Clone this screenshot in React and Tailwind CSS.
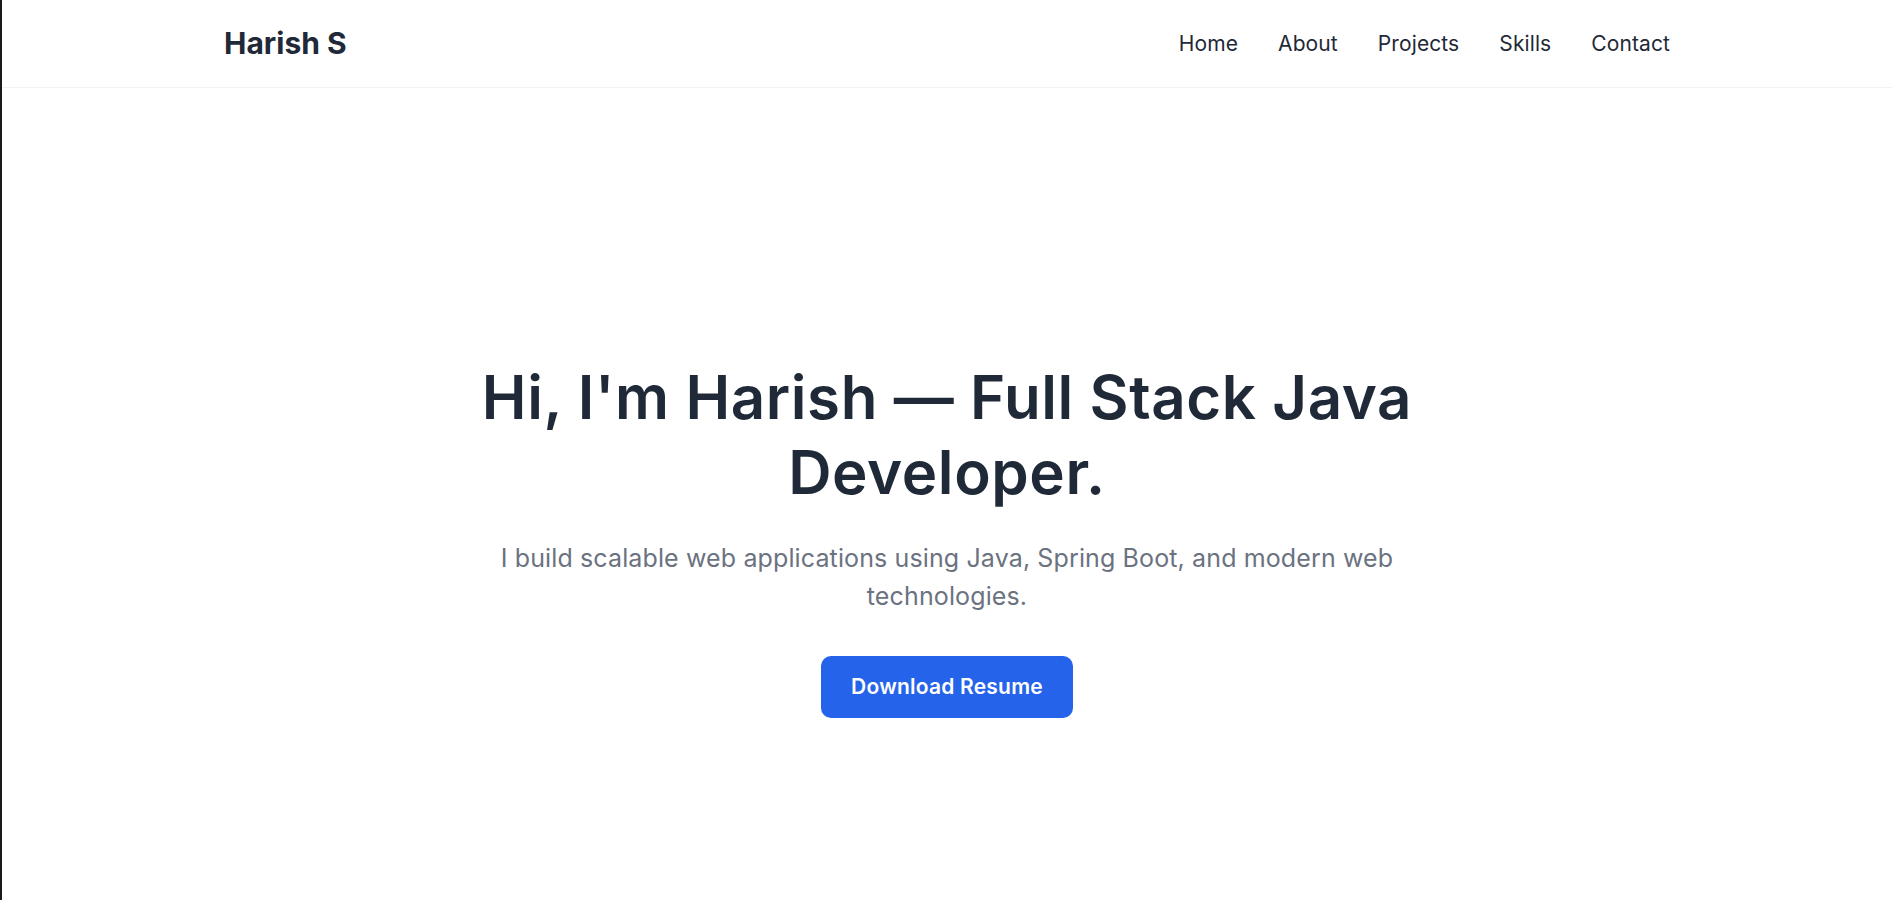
export default function App() {
  const links = ['Home', 'About', 'Projects', 'Skills', 'Contact']

  return (
    <main className="min-h-screen bg-white border-l-2 border-[#1a1a1a] font-['Inter','Noto_Sans',sans-serif] text-[#1f2937]">
      {/* Navbar */}
      <header className="h-[88px] border-b border-[#f1f2f4]">
        <div className="max-w-[1446px] h-full mx-auto flex items-center justify-between">
          <h1 className="text-[30px] font-bold">Harish S</h1>
          <nav className="flex items-center gap-10 text-[21px] tracking-[0.005em]">
            {links.map(link => (
              <a key={link} href={`#${link.toLowerCase()}`} className="hover:text-[#2563eb] transition">
                {link}
              </a>
            ))}
          </nav>
        </div>
      </header>

      {/* Hero */}
      <section className="pt-[272px] pb-20 px-6 text-center">
        <div className="max-w-[960px] mx-auto">
          <h2 className="text-[60px] leading-[75px] font-semibold tracking-[0.01em]">
            Hi, I'm Harish — Full Stack Java Developer.
          </h2>
          <p className="mt-[30px] text-[25px] leading-[37.5px] tracking-[0.005em] text-[#6b7280]">
            I build scalable web applications using Java, Spring Boot, and modern web technologies.
          </p>
          <button className="mt-[41px] bg-[#2563eb] text-white rounded-[10px] px-[30px] py-4 text-[21px] leading-[30px] tracking-[0.01em] font-semibold hover:opacity-90 transition">
            Download Resume
          </button>
        </div>
      </section>
    </main>
  )
}
